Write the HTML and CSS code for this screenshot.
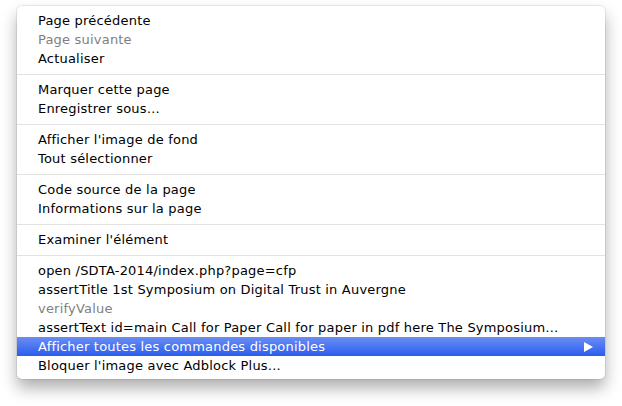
FILE: index.html
```html
<!DOCTYPE html>
<html lang="fr">
<head>
<meta charset="utf-8">
<title>Menu contextuel</title>
<link rel="stylesheet" href="styles.css">
</head>
<body>
<div class="menu">
  <div class="item">Page précédente</div>
  <div class="item disabled">Page suivante</div>
  <div class="item">Actualiser</div>
  <div class="sep"></div>
  <div class="item">Marquer cette page</div>
  <div class="item">Enregistrer sous…</div>
  <div class="sep"></div>
  <div class="item">Afficher l'image de fond</div>
  <div class="item">Tout sélectionner</div>
  <div class="sep"></div>
  <div class="item">Code source de la page</div>
  <div class="item">Informations sur la page</div>
  <div class="sep"></div>
  <div class="item">Examiner l'élément</div>
  <div class="sep"></div>
  <div class="item">open /SDTA-2014/index.php?page=cfp</div>
  <div class="item">assertTitle 1st Symposium on Digital Trust in Auvergne</div>
  <div class="item disabled">verifyValue</div>
  <div class="item">assertText id=main Call for Paper Call for paper in pdf here The Symposium…</div>
  <div class="item active"><span>Afficher toutes les commandes disponibles</span><svg class="arrow" width="9" height="10" viewBox="0 0 9 10"><path d="M0 0 L9 5 L0 10 Z" fill="#fff"/></svg></div>
  <div class="item">Bloquer l'image avec Adblock Plus…</div>
</div>
</body>
</html>
```
FILE: styles.css
```css
html, body {
  margin: 0;
  padding: 0;
  background: #ffffff;
}
body {
  width: 622px;
  height: 406px;
  overflow: hidden;
  font-family: "DejaVu Sans", sans-serif;
  font-size: 13px;
  color: #000;
}
.menu {
  margin: 6px 0 0 17px;
  width: 588px;
  padding: 5px 0 4px;
  background: #fff;
  border-radius: 5px;
  box-shadow: 0 0 0 1px rgba(0, 0, 0, 0.07), 0 9px 16px rgba(0, 0, 0, 0.32);
  box-sizing: border-box;
}
.item {
  height: 19px;
  line-height: 19px;
  padding: 0 12px 0 21px;
  display: flex;
  align-items: center;
  justify-content: space-between;
  white-space: nowrap;
  letter-spacing: 0.2px;
}
.disabled {
  color: #808080;
}
.active {
  color: #fff;
  background: linear-gradient(#6a8df4, #2b5dee);
}
.arrow {
  display: block;
}
.sep {
  height: 12px;
  display: flex;
  align-items: center;
}
.sep::before {
  content: "";
  display: block;
  width: 100%;
  height: 1px;
  background: #e2e2e2;
}
```
